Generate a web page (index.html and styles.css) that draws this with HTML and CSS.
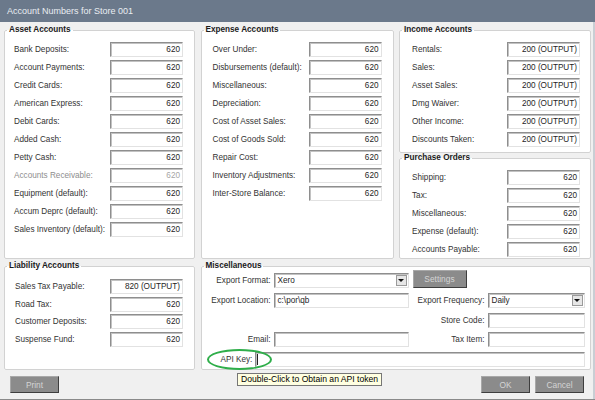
FILE: index.html
```html
<!DOCTYPE html>
<html>
<head>
<meta charset="utf-8">
<link rel="stylesheet" href="styles.css">
</head>
<body>
<div class="titlebar">Account Numbers for Store 001</div>
<div class="main">
  <fieldset class="group g-asset">
    <legend>Asset Accounts</legend>
    <div class="rows">
      <div class="row"><span>Bank Deposits:</span><div class="field">620</div></div>
      <div class="row"><span>Account Payments:</span><div class="field">620</div></div>
      <div class="row"><span>Credit Cards:</span><div class="field">620</div></div>
      <div class="row"><span>American Express:</span><div class="field">620</div></div>
      <div class="row"><span>Debit Cards:</span><div class="field">620</div></div>
      <div class="row"><span>Added Cash:</span><div class="field">620</div></div>
      <div class="row"><span>Petty Cash:</span><div class="field">620</div></div>
      <div class="row disabled"><span>Accounts Receivable:</span><div class="field">620</div></div>
      <div class="row"><span>Equipment (default):</span><div class="field">620</div></div>
      <div class="row"><span>Accum Deprc (default):</span><div class="field">620</div></div>
      <div class="row"><span>Sales Inventory (default):</span><div class="field">620</div></div>
    </div>
  </fieldset>

  <fieldset class="group g-expense">
    <legend>Expense Accounts</legend>
    <div class="rows">
      <div class="row"><span>Over Under:</span><div class="field">620</div></div>
      <div class="row"><span>Disbursements (default):</span><div class="field">620</div></div>
      <div class="row"><span>Miscellaneous:</span><div class="field">620</div></div>
      <div class="row"><span>Depreciation:</span><div class="field">620</div></div>
      <div class="row"><span>Cost of Asset Sales:</span><div class="field">620</div></div>
      <div class="row"><span>Cost of Goods Sold:</span><div class="field">620</div></div>
      <div class="row"><span>Repair Cost:</span><div class="field">620</div></div>
      <div class="row"><span>Inventory Adjustments:</span><div class="field">620</div></div>
      <div class="row"><span>Inter-Store Balance:</span><div class="field">620</div></div>
    </div>
  </fieldset>

  <div class="col3">
    <fieldset class="group g-income">
      <legend>Income Accounts</legend>
      <div class="rows">
        <div class="row"><span>Rentals:</span><div class="field">200 (OUTPUT)</div></div>
        <div class="row"><span>Sales:</span><div class="field">200 (OUTPUT)</div></div>
        <div class="row"><span>Asset Sales:</span><div class="field">200 (OUTPUT)</div></div>
        <div class="row"><span>Dmg Waiver:</span><div class="field">200 (OUTPUT)</div></div>
        <div class="row"><span>Other Income:</span><div class="field">200 (OUTPUT)</div></div>
        <div class="row"><span>Discounts Taken:</span><div class="field">200 (OUTPUT)</div></div>
      </div>
    </fieldset>
    <fieldset class="group g-purchase">
      <legend>Purchase Orders</legend>
      <div class="rows">
        <div class="row"><span>Shipping:</span><div class="field">620</div></div>
        <div class="row"><span>Tax:</span><div class="field">620</div></div>
        <div class="row"><span>Miscellaneous:</span><div class="field">620</div></div>
        <div class="row"><span>Expense (default):</span><div class="field">620</div></div>
        <div class="row"><span>Accounts Payable:</span><div class="field">620</div></div>
      </div>
    </fieldset>
  </div>

  <fieldset class="group g-liability">
    <legend>Liability Accounts</legend>
    <div class="rows">
      <div class="row"><span>Sales Tax Payable:</span><div class="field">820 (OUTPUT)</div></div>
      <div class="row"><span>Road Tax:</span><div class="field">620</div></div>
      <div class="row"><span>Customer Deposits:</span><div class="field">620</div></div>
      <div class="row"><span>Suspense Fund:</span><div class="field">620</div></div>
    </div>
  </fieldset>

  <fieldset class="group g-misc">
    <legend>Miscellaneous</legend>
    <div class="misc-grid">
      <span class="lbl low">Export Format:</span>
      <div class="select low"><span class="val">Xero</span><span class="arrow"></span></div>
      <div class="btn btn-settings">Settings</div>

      <span class="lbl">Export Location:</span>
      <div class="field left">c:\por\qb</div>
      <span class="lbl">Export Frequency:</span>
      <div class="select"><span class="val">Daily</span><span class="arrow"></span></div>

      <span class="lbl c3">Store Code:</span>
      <div class="field left"></div>

      <span class="lbl">Email:</span>
      <div class="field left"></div>
      <span class="lbl">Tax Item:</span>
      <div class="field left"></div>

      <div class="api-row">
        <span class="api-lbl">API Key:</span>
        <div class="field left api-field"><span class="caret"></span></div>
      </div>
    </div>
  </fieldset>
</div>
<div class="buttons">
  <div class="btn">Print</div>
  <div class="spacer"></div>
  <div class="btn">OK</div>
  <div class="btn">Cancel</div>
</div>
<div class="highlight"></div>
<div class="tooltip">Double-Click to Obtain an API token</div>
</body>
</html>
```

FILE: styles.css
```css
* { box-sizing: border-box; }
html, body { margin: 0; padding: 0; }
body {
  width: 595px;
  height: 400px;
  background: #f0f0f0;
  font-family: "Liberation Sans", Arial, sans-serif;
  font-size: 8.2px;
  color: #333;
  position: relative;
  overflow: hidden;
  box-shadow: inset 0 -1px 0 #8a8a8a, inset -2px 0 0 #c9ced4;
}
.titlebar {
  height: 22px;
  background: #6b798b;
  color: #e9edf2;
  font-size: 9px;
  line-height: 23px;
  padding-left: 7px;
}
.main {
  display: grid;
  grid-template-columns: 191px 193px 192px;
  grid-template-rows: 234px 109px;
  column-gap: 5.5px;
  row-gap: 2px;
  padding: 3px 4px 0 4px;
}
.group {
  margin: 0;
  padding: 0;
  border: 1px solid #d2d2d2;
  border-radius: 2px;
  background: #fff;
  min-width: 0;
}
.group legend {
  font-weight: bold;
  color: #1b1b1b;
  padding: 0 2px;
  margin-left: 2px;
  line-height: 10px;
  font-size: 8.2px;
}
.rows {
  display: flex;
  flex-direction: column;
  gap: 3px;
  padding-top: 7px;
}
.row {
  display: grid;
  grid-template-columns: 96px 73px;
  height: 15px;
  align-items: center;
  white-space: nowrap;
}
.g-asset .rows { padding-left: 9px; }
.g-expense .rows { padding-left: 11px; }
.g-income .rows, .g-purchase .rows { padding-left: 12px; }
.g-income .row, .g-purchase .row { grid-template-columns: 95px 73px; }
.g-liability .rows { padding-left: 10px; padding-top: 8px; gap: 2.5px; }
.g-liability .row { grid-template-columns: 95px 73px; }

.col3 { display: flex; flex-direction: column; }
.g-income { height: 128px; }
.g-purchase { flex: 1; }
.g-misc { grid-column: 2 / 4; }

.field {
  height: 15px;
  border: 1px solid;
  border-color: #8e8e8e #e2e2e2 #e2e2e2 #8e8e8e;
  box-shadow: inset 1px 1px 0 #c2c2c2;
  background: #fff;
  color: #1e1e1e;
  text-align: right;
  padding: 0 2px 0 3px;
  line-height: 14px;
  white-space: nowrap;
  overflow: hidden;
}
.field.left { text-align: left; }
.disabled span { color: #8e8e8e; }
.disabled .field { color: #a5a5a5; }

.misc-grid {
  display: grid;
  grid-template-columns: 70px 135px 75px 97px;
  grid-template-rows: 18px 15px 15px 15px 15px;
  column-gap: 2px;
  row-gap: 4.75px;
  margin-top: -1px;
}
.lbl {
  text-align: right;
  align-self: center;
  padding-right: 1px;
  white-space: nowrap;
}
.lbl.low { align-self: end; line-height: 15px; }
.lbl.c3 { grid-column: 3; }
.select {
  display: flex;
  align-items: center;
  height: 15px;
  border: 1px solid;
  border-color: #8e8e8e #e2e2e2 #e2e2e2 #8e8e8e;
  box-shadow: inset 1px 1px 0 #c2c2c2;
  background: #fff;
  color: #1e1e1e;
  padding-left: 3px;
}
.select.low { align-self: end; }
.select .val { flex: 1; }
.arrow {
  width: 11px;
  height: 11px;
  margin-right: 1px;
  border: 1px solid #9a9a9a;
  background: #e6e6e6;
  display: flex;
  align-items: center;
  justify-content: center;
}
.arrow::after {
  content: "";
  border-left: 3px solid transparent;
  border-right: 3px solid transparent;
  border-top: 3px solid #111;
}
.api-row {
  grid-column: 1 / -1;
  display: flex;
  align-items: center;
  padding-left: 19px;
}
.api-lbl { width: 35px; }
.api-field {
  width: 330px;
  display: flex;
  align-items: center;
  padding-left: 1px;
}
.caret { width: 1px; height: 11px; background: #222; }

.btn {
  height: 17px;
  width: 49px;
  background: #8b8b8b;
  border: 1px solid;
  border-color: #a8a8a8 #3e3e3e #3e3e3e #a8a8a8;
  color: #d4d4d4;
  font-size: 8.4px;
  display: flex;
  align-items: center;
  justify-content: center;
}
.btn-settings {
  grid-column: 3 / 5;
  justify-self: start;
  margin-left: 2px;
  width: 54px;
  height: 18px;
}
.buttons {
  display: flex;
  gap: 5px;
  padding: 6px 11px 0 10px;
}
.spacer { flex: 1; }

.highlight {
  position: absolute;
  left: 207px;
  top: 349px;
  width: 65px;
  height: 21px;
  border: 2.5px solid #2fae4a;
  border-radius: 50%;
}
.tooltip {
  position: absolute;
  left: 237px;
  top: 373px;
  height: 13px;
  padding: 0 3px;
  border: 1px solid #767676;
  background: #ffffe1;
  color: #000;
  font-size: 8.6px;
  line-height: 11px;
  white-space: nowrap;
}
```
